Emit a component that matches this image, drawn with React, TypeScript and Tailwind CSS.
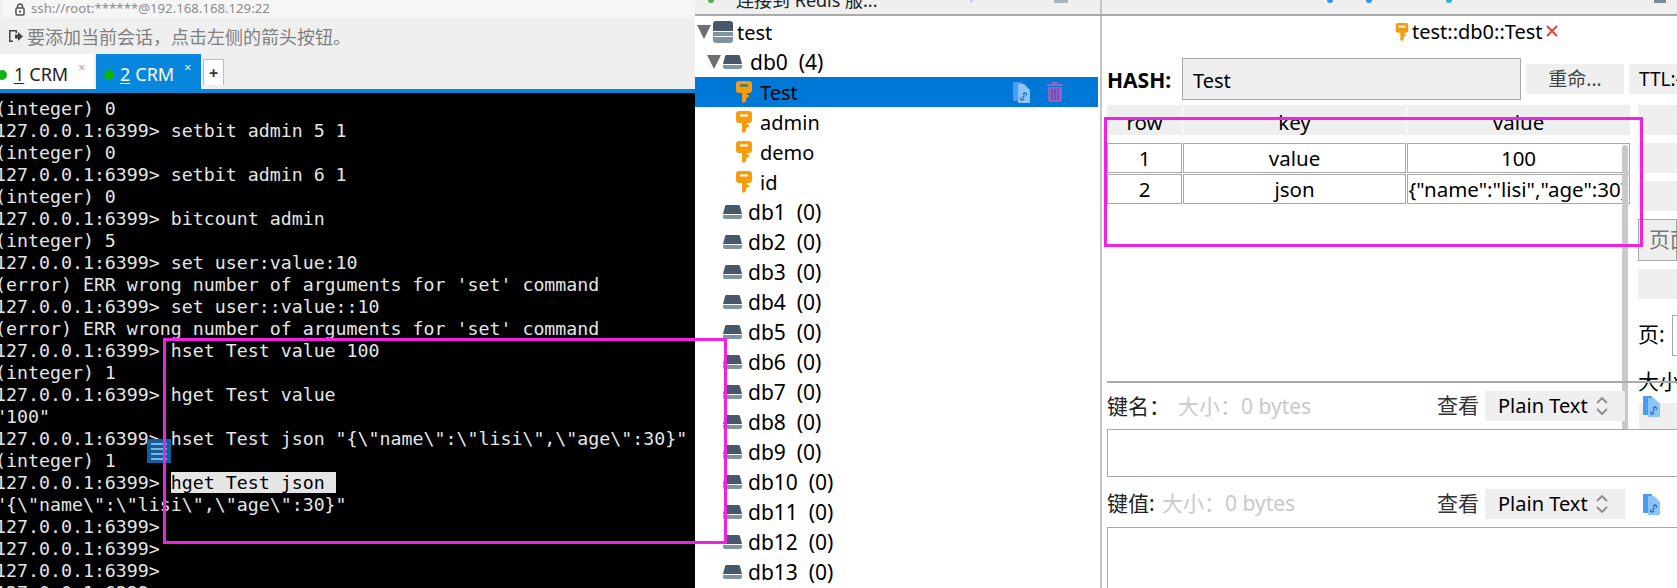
import React from "react";

const uiFont = "font-['Noto_Sans','Noto_Sans_CJK_SC',sans-serif]";

const termLines = [
    "(integer) 0",
    "127.0.0.1:6399> setbit admin 5 1",
    "(integer) 0",
    "127.0.0.1:6399> setbit admin 6 1",
    "(integer) 0",
    "127.0.0.1:6399> bitcount admin",
    "(integer) 5",
    "127.0.0.1:6399> set user:value:10",
    "(error) ERR wrong number of arguments for 'set' command",
    "127.0.0.1:6399> set user::value::10",
    "(error) ERR wrong number of arguments for 'set' command",
    "127.0.0.1:6399> hset Test value 100",
    "(integer) 1",
    "127.0.0.1:6399> hget Test value",
    "\"100\"",
    "127.0.0.1:6399> hset Test json \"{\\\"name\\\":\\\"lisi\\\",\\\"age\\\":30}\"",
    "(integer) 1",
    "SELECTED",
    "\"{\\\"name\\\":\\\"lisi\\\",\\\"age\\\":30}\"",
    "127.0.0.1:6399>",
    "127.0.0.1:6399>",
    "127.0.0.1:6399>",
    "127.0.0.1:6399>",
];

const keys = ["Test", "admin", "demo", "id"];
const dbs = [1, 2, 3, 4, 5, 6, 7, 8, 9, 10, 11, 12, 13];

function KeyIcon() {
    return (
        <svg width="16" height="22" viewBox="0 0 16 22" className="shrink-0">
            <path
                fillRule="evenodd"
                fill="#f59d0e"
                d="M3 0h10a3 3 0 0 1 3 3v6a3 3 0 0 1-3 3h-2v2h2v2h-2v1l-1 1v2l-2 2-2-1V12H3a3 3 0 0 1-3-3V3a3 3 0 0 1 3-3zM4 3.500v2h8v-2z"
            />
        </svg>
    );
}

function DbIcon() {
    return (
        <svg width="19" height="14" viewBox="0 0 19 14" className="shrink-0">
            <path fill="#46586a" d="M3.500 0h12a1.500 1.500 0 0 1 1.400 1L19 9H0l2.100-8a1.500 1.500 0 0 1 1.400-1z" />
            <path fill="#7f94a3" d="M0 10h19v2a2 2 0 0 1-2 2H2a2 2 0 0 1-2-2z" />
        </svg>
    );
}

function StackIcon() {
    return (
        <svg width="20" height="22" viewBox="0 0 20 22" className="shrink-0">
            <path fill="#46586a" d="M3 0h14a3 3 0 0 1 3 3v7H0V3a3 3 0 0 1 3-3z" />
            <rect x="0" y="11" width="20" height="4" fill="#7f94a3" />
            <path fill="#7f94a3" d="M0 16h20v3a3 3 0 0 1-3 3H3a3 3 0 0 1-3-3z" />
        </svg>
    );
}

function Triangle() {
    return (
        <svg width="14" height="14" viewBox="0 0 14 14" className="shrink-0">
            <path fill="#6e6e6e" d="M0 0h14L7 14z" />
        </svg>
    );
}

function DocIcon() {
    return (
        <svg width="17" height="21" viewBox="0 0 17 21" className="shrink-0">
            <path fill="#4a9cf0" d="M1 0h8v19H1a1 1 0 0 1-1-1V1a1 1 0 0 1 1-1z" />
            <path fill="#8cc4fa" d="M5 2h6l6 6v12a1 1 0 0 1-1 1H5z" />
            <path fill="none" stroke="#2563b8" strokeWidth="1.2" d="M8 15.500a1.400 1.400 0 0 0 2 2l1-1M13 13.500a1.400 1.400 0 0 0-2-2l-1 1M9.500 15.500l2-2" />
        </svg>
    );
}

function TrashIcon() {
    return (
        <svg width="16" height="20" viewBox="0 0 16 20" className="shrink-0">
            <path fill="#8e62c6" d="M5 0h6v2h5v2H0V2h5zM1 5h14v13a2 2 0 0 1-2 2H3a2 2 0 0 1-2-2z" />
            <path stroke="#6f45a8" strokeWidth="1.400" d="M5 7v11M8 7v11M11 7v11" />
        </svg>
    );
}

function Chevrons() {
    return (
        <svg width="12" height="20" viewBox="0 0 12 20" className="shrink-0">
            <path fill="none" stroke="#8a8a8a" strokeWidth="1.800" d="M1 7l5-5 5 5M1 13l5 5 5-5" />
        </svg>
    );
}

function Cell({ width, children }: { width: string; children: React.ReactNode }) {
    return (
        <div className={`${width} h-full border border-[#a8a8a8] flex items-center justify-center overflow-hidden whitespace-nowrap`}>
            {children}
        </div>
    );
}

function ViewSelect() {
    return (
        <div className="flex items-center ml-auto">
            <span className="text-[21px] text-[#333]">查看</span>
            <div className="w-[140px] h-[30px] ml-[6px] bg-[#efefef] flex items-center pl-[13px] pr-[17px] justify-between">
                <span className="text-[20px] leading-none">Plain Text</span>
                <Chevrons />
            </div>
        </div>
    );
}

export default function App() {
    return (
        <div className={`relative w-[1677px] h-[588px] overflow-hidden bg-white flex ${uiFont}`}>
            {/* shell window */}
            <div className="w-[695px] h-full shrink-0 flex flex-col bg-[#efefef]">
                <div className="h-[18px] ml-[3px] bg-[#f6f6f6] flex items-center pl-[11px] gap-[5px] overflow-hidden">
                    <svg width="12" height="13" viewBox="0 0 12 13" className="shrink-0">
                        <path fill="none" stroke="#555" strokeWidth="1.500" d="M3.500 5V3.500a2.500 2.500 0 0 1 5 0V5" />
                        <rect x="2" y="5" width="8" height="7" rx="1" fill="none" stroke="#555" strokeWidth="1.500" />
                        <rect x="5" y="7.500" width="2" height="2" fill="#555" />
                    </svg>
                    <span className="text-[13.2px] leading-none text-[#8c8c8c] font-['Noto_Sans',sans-serif]">ssh://root:******@192.168.168.129:22</span>
                </div>
                <div className="h-[36px] flex items-center pl-[9px] gap-[4px]">
                    <svg width="14" height="14" viewBox="0 0 14 14" className="shrink-0">
                        <path fill="#444" d="M0 1h8v3H6.500V2.500h-5v9H4V13H0z" />
                        <path fill="#444" d="M6 5.500h3V3l5 4.500L9 12V9.500H6z" />
                    </svg>
                    <span className="text-[18px] leading-none mt-[2px] text-[#7f7f7f]">要添加当前会话，点击左侧的箭头按钮。</span>
                </div>
                <div className="h-[35px] flex bg-[#efefef]">
                    <div className="w-[94px] h-full bg-white relative flex items-center pl-[14px] pt-[5px] text-[18px] text-[#222]">
                        <span className="absolute left-[-3px] top-[16px] w-[10px] h-[10px] rounded-full bg-[#0fb40f]" />
                        <span className="underline underline-offset-2">1</span>
                        <span className="ml-[5px]">CRM</span>
                        <span className="absolute left-[78px] top-[4px] text-[13px] text-[#aaa]">×</span>
                    </div>
                    <div className="w-[105px] h-full ml-[2px] bg-[#0787db] relative flex items-center pl-[24px] pt-[5px] text-[18px] text-white">
                        <span className="absolute left-[8px] top-[16px] w-[10px] h-[10px] rounded-full bg-[#0fb40f]" />
                        <span className="underline underline-offset-2">2</span>
                        <span className="ml-[5px]">CRM</span>
                        <span className="absolute left-[88px] top-[4px] text-[13px] text-[#dbeaf7]">×</span>
                    </div>
                    <div className="w-[21px] h-[26px] mt-[5px] ml-[2px] bg-white border border-[#bdbdbd] border-b-0 flex items-center justify-center text-[16px] font-bold text-[#333]">
                        +
                    </div>
                </div>
                <div className="h-[4px] bg-[#0787db]" />
                <div className="flex-1 bg-black overflow-hidden pt-[5px] pl-0">
                    <div className="-ml-[5px] font-['DejaVu_Sans_Mono',monospace] text-[18.25px] leading-[22px] text-[#e5e5e5] whitespace-pre">
                        {termLines.map((line, i) =>
                            line === "SELECTED" ? (
                                <div key={i} className="h-[22px]">
                                    127.0.0.1:6399&gt; <span className="bg-[#e5e5e5] text-black">hget Test json </span>
                                </div>
                            ) : (
                                <div key={i} className="h-[22px]">{line}</div>
                            )
                        )}
                    </div>
                </div>
            </div>

            {/* redis manager */}
            <div className="flex-1 min-w-0 flex flex-col">
                <div className="h-[16px] shrink-0 bg-[#efefef] border-b-2 border-[#a9a9a9] flex overflow-hidden">
                    <span className="w-[6px] h-[3px] ml-[13px] rounded-b-full bg-[#4caf50] shrink-0" />
                    <span className="w-[140px] ml-[22px] -mt-[10px] text-[18px] leading-[20px] text-[#222] whitespace-nowrap shrink-0">连接到 Redis 服...</span>
                    <span className="w-[3px] h-[2px] ml-[94px] bg-[#c8c8f0] shrink-0" />
                    <span className="w-[14px] h-[3px] ml-[81px] bg-[#a8b4bc] shrink-0" />
                    <span className="w-[2px] h-full ml-[32px] bg-[#c4c4c4] shrink-0" />
                    <span className="w-[6px] h-[3px] ml-[225px] rounded-b-full bg-[#2196f3] shrink-0" />
                    <span className="w-[6px] h-[3px] ml-[33px] rounded-b-full bg-[#2196f3] shrink-0" />
                    <span className="w-[6px] h-[3px] ml-[74px] rounded-b-full bg-[#1fb6d8] shrink-0" />
                    <span className="w-[12px] h-[3px] ml-[202px] bg-[#7d8a94] shrink-0" />
                </div>
                <div className="flex-1 min-h-0 flex">
                    {/* tree */}
                    <div className="w-[403px] shrink-0 text-[20px] text-black pt-[1px]">
                        <div className="h-[30px] flex items-center pl-[2px] gap-[2px]">
                            <Triangle />
                            <StackIcon />
                            <span className="ml-[2px] mt-[2px]">test</span>
                        </div>
                        <div className="h-[30px] flex items-center pl-[12px] gap-[2px]">
                            <Triangle />
                            <DbIcon />
                            <span className="ml-[6px] mt-[2px] text-[21px] whitespace-pre">db0  (4)</span>
                        </div>
                        {keys.map((name, i) => (
                            <div
                                key={name}
                                className={`h-[30px] flex items-center pl-[41px] pr-[35px] ${i === 0 ? "bg-[#0078d7]" : ""}`}
                            >
                                <KeyIcon />
                                <span className="ml-[8px] mt-[2px]">{name}</span>
                                {i === 0 && (
                                    <div className="ml-auto flex items-center gap-[17px]">
                                        <DocIcon />
                                        <TrashIcon />
                                    </div>
                                )}
                            </div>
                        ))}
                        {dbs.map((n) => (
                            <div key={n} className="h-[30px] flex items-center pl-[28px]">
                                <DbIcon />
                                <span className="ml-[6px] mt-[2px] text-[21px] whitespace-pre">{`db${n}  (0)`}</span>
                            </div>
                        ))}
                    </div>

                    {/* key panel */}
                    <div className="flex-1 min-w-0 border-l-2 border-[#c4c4c4] ml-[2px] pl-[5px] relative overflow-hidden text-[19px] text-black">
                        <div className="absolute left-[520px] top-[129px] w-[6px] h-[284px] rounded-t-[3px] bg-[#c9c9c9]" />
                        <div className="h-[42px] flex items-center pl-[288px] pb-[10px] gap-[3px]">
                            <div className="scale-[0.82] -mx-[1px]"><KeyIcon /></div>
                            <span className="text-[20px]">test::db0::Test</span>
                            <svg width="14" height="14" viewBox="0 0 14 14" className="-ml-[1px] -mt-[2px]">
                                <path stroke="#ef4040" strokeWidth="2" d="M2 2l10 10M12 2L2 12" />
                            </svg>
                        </div>
                        <div className="h-[47px] flex items-start">
                            <div className="w-[75px] h-[42px] shrink-0 flex items-center pt-[3px] text-[21px] font-bold">HASH:</div>
                            <div className="w-[339px] h-[42px] shrink-0 bg-[#efefef] border border-[#a8a8a8] flex items-center pt-[3px] pl-[10px] text-[20px]">Test</div>
                            <div className="w-[98px] h-[30px] shrink-0 mt-[6px] ml-[5px] bg-[#efefef] flex items-center justify-center text-[19px] text-[#444]">重命...</div>
                            <div className="w-[60px] h-[30px] shrink-0 mt-[6px] ml-[5px] bg-[#efefef] flex items-center pl-[10px] text-[19px] whitespace-nowrap">TTL:-1</div>
                        </div>
                        <div className="h-[276px] flex gap-[8px]">
                            <div className="w-[523px] shrink-0 text-[20.5px]">
                                <div className="h-[30px] flex gap-[1px] leading-[34px]">
                                    <div className="w-[75px] bg-[#efefef] text-center overflow-hidden">row</div>
                                    <div className="w-[223px] bg-[#efefef] text-center overflow-hidden">key</div>
                                    <div className="flex-1 bg-[#efefef] text-center overflow-hidden">value</div>
                                </div>
                                <div className="h-[30px] mt-[8px] flex gap-[1px]">
                                    <Cell width="w-[75px]">1</Cell>
                                    <Cell width="w-[223px]">value</Cell>
                                    <Cell width="flex-1 min-w-0">100</Cell>
                                </div>
                                <div className="h-[30px] mt-[1px] flex gap-[1px]">
                                    <Cell width="w-[75px]">2</Cell>
                                    <Cell width="w-[223px]">json</Cell>
                                    <Cell width="flex-1 min-w-0">{"{\"name\":\"lisi\",\"age\":30}"}</Cell>
                                </div>
                            </div>
                            <div className="flex-1 min-w-0 flex flex-col">
                                <div className="h-[30px] bg-[#efefef] shrink-0" />
                                <div className="h-[30px] mt-[8px] bg-[#efefef] shrink-0" />
                                <div className="h-[30px] mt-[8px] bg-[#efefef] shrink-0" />
                                <div className="h-[42px] mt-[8px] bg-[#efefef] border border-[#a8a8a8] flex items-center pl-[10px] text-[21px] text-[#777] whitespace-nowrap shrink-0">页面</div>
                                <div className="h-[30px] mt-[8px] bg-[#efefef] shrink-0" />
                                <div className="h-[42px] mt-[15px] flex items-center shrink-0 text-[21px]">
                                    <span className="w-[34px] shrink-0 whitespace-nowrap">页:</span>
                                    <div className="w-[10px] h-[41px] shrink-0 border border-[#a8a8a8]" />
                                </div>
                                <div className="mt-[12px] leading-[26px] text-[21px] whitespace-nowrap shrink-0">大小</div>
                            </div>
                        </div>
                        <div className="h-[2px] bg-[#aaaaaa] relative" />
                        <div className="h-[46px] flex items-start pt-[7px] w-[518px] relative">
                            <span className="text-[21px] text-[#222] leading-[30px] mt-[1px] w-[71px] shrink-0">键名：</span>
                            <span className="text-[21px] text-[#c9c9c9] leading-[30px] mt-[1px] whitespace-pre">大小：0 bytes</span>
                            <ViewSelect />
                            <div className="absolute left-[532px] top-[20px] w-[60px] h-[26px] bg-[#efefef]" />
                            <div className="absolute left-[536px] top-[13px]"><DocIcon /></div>
                        </div>
                        <div className="h-[48px] w-[600px] bg-white border border-[#a8a8a8] relative" />
                        <div className="h-[50px] flex items-start pt-[11px] w-[518px] relative">
                            <span className="text-[21px] text-[#222] leading-[30px] w-[55px] shrink-0">键值:</span>
                            <span className="text-[21px] text-[#c9c9c9] leading-[30px] whitespace-pre">大小：0 bytes</span>
                            <ViewSelect />
                            <div className="absolute left-[536px] top-[17px]"><DocIcon /></div>
                        </div>
                        <div className="h-[80px] w-[600px] border border-[#a8a8a8]" />
                    </div>
                </div>
            </div>

            {/* annotations drawn over the screenshot */}
            <div className="absolute left-[147px] top-[439px] w-[24px] h-[24px] bg-[#0f5f9f] flex flex-col justify-center gap-[3px] px-[4px]">
                <span className="h-[2px] bg-[#7fb4dc]" />
                <span className="h-[2px] bg-[#7fb4dc]" />
                <span className="h-[2px] bg-[#7fb4dc]" />
                <span className="h-[2px] bg-[#7fb4dc]" />
            </div>
            <div className="absolute left-[163px] top-[338px] w-[564px] h-[206px] border-[3px] border-[#f020e4]" />
            <div className="absolute left-[1104px] top-[117px] w-[539px] h-[130px] border-[3px] border-[#f020e4]" />
        </div>
    );
}
